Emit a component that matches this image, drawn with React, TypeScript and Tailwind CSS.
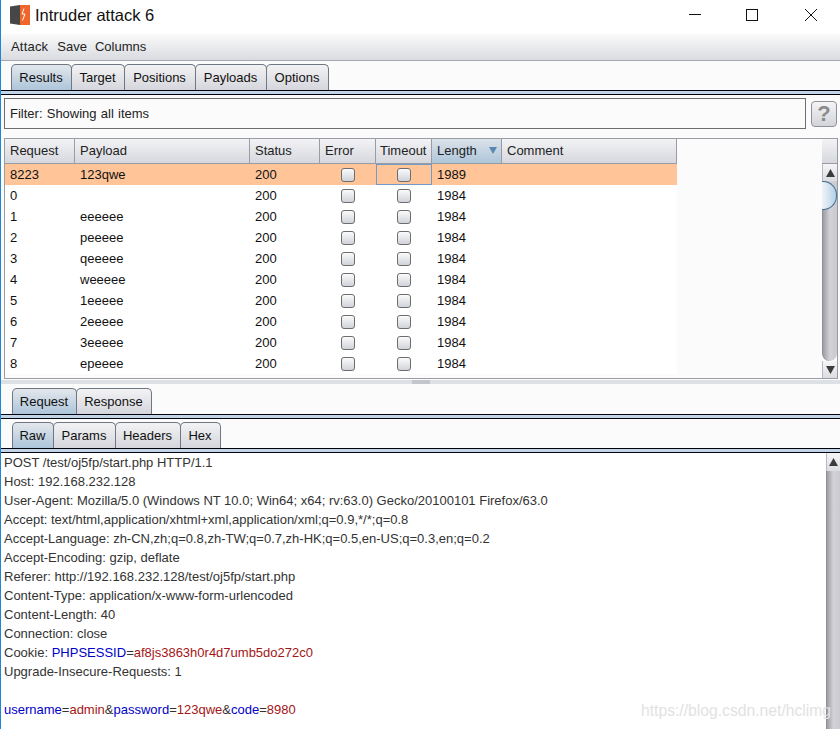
import React from 'react';

const rows = [
  { id: '8223', payload: '123qwe', length: '1989', hit: true },
  { id: '0', payload: '', length: '1984' },
  { id: '1', payload: 'eeeeee', length: '1984' },
  { id: '2', payload: 'peeeee', length: '1984' },
  { id: '3', payload: 'qeeeee', length: '1984' },
  { id: '4', payload: 'weeeee', length: '1984' },
  { id: '5', payload: '1eeeee', length: '1984' },
  { id: '6', payload: '2eeeee', length: '1984' },
  { id: '7', payload: '3eeeee', length: '1984' },
  { id: '8', payload: 'epeeee', length: '1984' },
];

const columns = ['Request', 'Payload', 'Status', 'Error', 'Timeout', 'Length', 'Comment'];

const headers = [
  'POST /test/oj5fp/start.php HTTP/1.1',
  'Host: 192.168.232.128',
  'User-Agent: Mozilla/5.0 (Windows NT 10.0; Win64; x64; rv:63.0) Gecko/20100101 Firefox/63.0',
  'Accept: text/html,application/xhtml+xml,application/xml;q=0.9,*/*;q=0.8',
  'Accept-Language: zh-CN,zh;q=0.8,zh-TW;q=0.7,zh-HK;q=0.5,en-US;q=0.3,en;q=0.2',
  'Accept-Encoding: gzip, deflate',
  'Referer: http://192.168.232.128/test/oj5fp/start.php',
  'Content-Type: application/x-www-form-urlencoded',
  'Content-Length: 40',
  'Connection: close',
];

const Key = ({ children }: { children: React.ReactNode }) => <span className="text-[#0000c8]">{children}</span>;
const Val = ({ children }: { children: React.ReactNode }) => <span className="text-[#a31515]">{children}</span>;

const Tabs = ({ items, pad }: { items: [string, number][]; pad: string }) => (
  <div className={`flex items-end bg-[#fbfbfb] ${pad}`}>
    {items.map(([label, width], i) => (
      <div
        key={label}
        style={{ width }}
        className={`flex h-[26px] items-center justify-center rounded-t-[5px] border border-b-0 border-[#6f7782] pr-[1px] text-[13px] text-[#111] ${
          i === 0
            ? 'bg-gradient-to-b from-[#e3e7ec] to-[#adc5da]'
            : 'bg-gradient-to-b from-[#f3f3f5] to-[#d5d6dc]'
        } ${i > 0 ? '-ml-px' : ''}`}
      >
        {label}
      </div>
    ))}
  </div>
);

const Rule = () => <div className="h-[5px] border-y border-[#03030f] bg-[#c2d5e6]" />;

const Check = () => (
  <div className="h-[14px] w-[14px] rounded-[3px] border border-[#6d6d6d] bg-gradient-to-b from-[#fbfbfb] to-[#d0d3da]" />
);

const Arrow = ({ up }: { up?: boolean }) => (
  <svg width="9" height="8" viewBox="0 0 9 8">
    <path d={up ? 'M4.5 0L9 8H0z' : 'M0 0h9L4.5 8z'} fill="#3c3c3c" />
  </svg>
);

const Logo = () => (
  <svg width="21" height="20" viewBox="0 0 21 20" className="shrink-0">
    <path d="M0 1.5L10 0v20L0 18.5z" fill="#474747" />
    <path d="M10 0h10v20H10z" fill="#f0652a" />
    <path d="M14 3.5l-2 5.5h3l-2.5 6.5" fill="none" stroke="#fff" strokeWidth="1" />
  </svg>
);

export default function App() {
  return (
    <div className="relative h-[729px] w-[840px] overflow-hidden border-l border-[#1c86d8] bg-[#fbfbfb] font-['Liberation_Sans',Arial,sans-serif] text-[13px] text-[#111]">
      {/* Title bar */}
      <div className="flex h-[34px] items-center bg-white pb-[4px] pl-[9px]">
        <Logo />
        <span className="ml-[4px] text-[16.5px] text-[#111]">Intruder attack 6</span>
        <div className="ml-auto flex items-center">
          <svg width="14" height="14" viewBox="0 0 14 14" className="mr-[43px]">
            <path d="M1 6.5h12" stroke="#111" fill="none" />
          </svg>
          <svg width="14" height="14" viewBox="0 0 14 14" className="mr-[45px]">
            <rect x="1.5" y="1.5" width="11" height="11" stroke="#111" fill="none" />
          </svg>
          <svg width="14" height="14" viewBox="0 0 14 14" className="mr-[22px]">
            <path d="M1 1l12 12M13 1L1 13" stroke="#111" fill="none" />
          </svg>
        </div>
      </div>

      {/* Menu bar */}
      <div className="flex h-[27px] items-center gap-[9px] border-b border-[#a5a8b0] bg-gradient-to-b from-[#fafafa] to-[#d9dbe0] pl-[10px] text-[13px] text-[#222]">
        <span className="tracking-[0.2px]">Attack</span>
        <span>Save</span>
        <span className="-ml-px">Columns</span>
      </div>

      {/* Main tabs */}
      <Tabs
        pad="pl-[10px] pt-[3px]"
        items={[
          ['Results', 61],
          ['Target', 54],
          ['Positions', 72],
          ['Payloads', 72],
          ['Options', 63],
        ]}
      />
      <Rule />

      {/* Filter */}
      <div className="mt-[3px] flex items-center pl-[3px]">
        <div className="flex h-[31px] w-[802px] items-center border border-[#6d6d6d] pl-[5px] text-[13px] text-[#222] [word-spacing:0.6px]">
          Filter: Showing all items
        </div>
        <div className="ml-[5px] flex h-[26px] w-[26px] items-center justify-center rounded-[4px] border border-[#8d9299] bg-gradient-to-b from-[#f5f5f6] to-[#d2d4da] text-[22px] font-bold text-[#8b8b8b]">
          ?
        </div>
      </div>

      {/* Results table */}
      <div className="ml-[3px] mt-[9px] flex h-[241px] w-[834px] border border-[#9a9ca5]">
        <div className="w-[672px]">
          <div className="grid h-[25px] grid-cols-[70px_175px_70px_56px_56px_70px_175px] border-b border-[#9a9ca5] bg-gradient-to-b from-[#f3f3f5] to-[#d6d8de] text-[13px] text-[#222]">
            {columns.map((col) => (
              <div
                key={col}
                className={`flex items-center border-r border-[#9a9ca5] pb-[1px] ${
                  col === 'Length' ? 'justify-between bg-gradient-to-b from-[#dbe2ea] to-[#aec6da] pr-[4px]' : ''
                } ${col === 'Timeout' ? 'pl-[4px]' : 'pl-[5px]'}`}
              >
                {col}
                {col === 'Length' && (
                  <svg width="8" height="7" viewBox="0 0 8 7">
                    <path d="M0 0h8L4 7z" fill="#5b86ad" />
                  </svg>
                )}
              </div>
            ))}
          </div>
          {rows.map((row) => (
            <div
              key={row.id}
              className={`grid h-[21px] grid-cols-[70px_175px_70px_56px_56px_70px_175px] text-[13px] text-[#111] ${
                row.hit ? 'bg-[#ffc599]' : 'bg-white'
              }`}
            >
              <div className="flex items-center pl-[5px]">{row.id}</div>
              <div className="flex items-center pl-[5px]">{row.payload}</div>
              <div className="flex items-center pl-[5px]">200</div>
              <div className="flex items-center justify-center">
                <Check />
              </div>
              <div className={`flex items-center justify-center ${row.hit ? 'border border-[#6f9bc6]' : ''}`}>
                <Check />
              </div>
              <div className="flex items-center pl-[5px]">{row.length}</div>
              <div />
            </div>
          ))}
        </div>
        <div className="flex-1" />
        <div className="flex w-[15px] flex-col">
          <div className="h-[25px] shrink-0 border-b border-[#9a9ca5] bg-gradient-to-b from-[#f3f3f5] to-[#d6d8de]" />
          <div className="flex h-[17px] shrink-0 items-center justify-center border-l border-[#b8b9bf] bg-gradient-to-b from-[#f5f5f6] to-[#dcdde2]">
            <Arrow up />
          </div>
          <div className="relative flex-1 rounded-b-[8px] border-l border-[#8e8f96] bg-gradient-to-r from-[#9e9ea4] via-[#d2d2d8] to-[#c9c9cf]">
            <div className="absolute -left-px top-0 h-[29px] w-[15px] rounded-r-[14px] border border-l-0 border-[#44708f] bg-gradient-to-r from-[#f0f4f8] to-[#b4d0e6]" />
          </div>
          <div className="flex h-[17px] shrink-0 items-center justify-center border-l border-[#b8b9bf] bg-gradient-to-b from-[#f5f5f6] to-[#dcdde2]">
            <Arrow />
          </div>
        </div>
      </div>

      {/* Splitter */}
      <div className="mt-[1px] flex h-[4px] justify-center bg-[#dde0e5]">
        <div className="h-[4px] w-[18px] bg-[#c3c6cc]" />
      </div>

      {/* Request / response */}
      <Tabs
        pad="pl-[11px] pt-[4px]"
        items={[
          ['Request', 65],
          ['Response', 76],
        ]}
      />
      <Rule />
      <Tabs
        pad="pl-[11px] pt-[3px]"
        items={[
          ['Raw', 42],
          ['Params', 63],
          ['Headers', 66],
          ['Hex', 41],
        ]}
      />
      <Rule />

      {/* Message editor */}
      <div className="flex h-[278px] bg-white">
        <div className="flex-1 pl-[3px] leading-[19px] text-[#333]">
          {headers.map((line) => (
            <div key={line} className="h-[19px] whitespace-nowrap">
              {line}
            </div>
          ))}
          <div className="h-[19px] whitespace-nowrap">
            Cookie: <Key>PHPSESSID</Key>=<Val>af8js3863h0r4d7umb5do272c0</Val>
          </div>
          <div className="h-[19px] whitespace-nowrap">Upgrade-Insecure-Requests: 1</div>
          <div className="h-[19px]" />
          <div className="h-[19px] whitespace-nowrap">
            <Key>username</Key>=<Val>admin</Val>&amp;<Key>password</Key>=<Val>123qwe</Val>&amp;<Key>code</Key>=<Val>8980</Val>
          </div>
        </div>
        <div className="flex w-[14px] flex-col">
          <div className="flex h-[18px] shrink-0 items-center justify-center border-l border-[#b8b9bf] bg-gradient-to-b from-[#f5f5f6] to-[#dcdde2]">
            <Arrow up />
          </div>
          <div className="flex-1 border-l border-[#8e8f96] bg-gradient-to-r from-[#9e9ea4] via-[#d2d2d8] to-[#c9c9cf]" />
        </div>
      </div>

      {/* Watermark */}
      <div className="absolute left-[640px] top-[699px] text-[15.7px] text-[#e2e2e2]">
        https://blog.csdn.net/hclimg
      </div>
    </div>
  );
}
